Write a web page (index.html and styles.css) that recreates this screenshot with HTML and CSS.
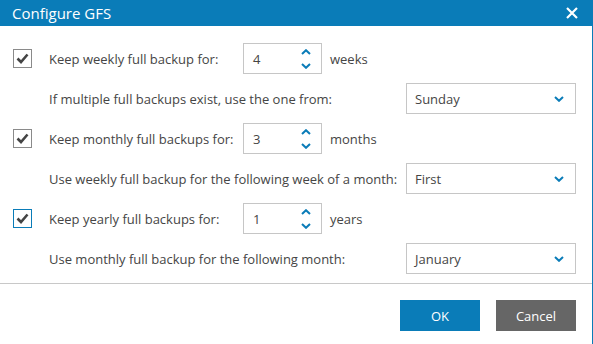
FILE: index.html
```html
<!DOCTYPE html>
<html lang="en">

<head>
  <meta charset="UTF-8" />
  <meta name="viewport" content="width=device-width, initial-scale=1.0" />
  <link rel="stylesheet" href="styles.css">
  <title>Configure GFS</title>
</head>

<body>
  <div class="dialog">
    <div class="dialog-header">
      <h1 class="title">Configure GFS</h1>
      <button class="close" aria-label="Close">
        <svg width="12" height="12" viewBox="0 0 12 12"><path d="M1 1L11 11M11 1L1 11" stroke="#fff" stroke-width="2.2" fill="none"/></svg>
      </button>
    </div>

    <div class="dialog-body">
      <div class="row">
        <span class="check"><svg width="13" height="11" viewBox="0 0 13 11"><path d="M1.5 5.5L5 9L11.5 1.5" stroke="#444" stroke-width="2.6" fill="none"/></svg></span>
        <span class="label">Keep weekly full backup for:</span>
        <div class="spin">
          <span class="value">4</span>
          <span class="arrows">
            <svg width="10" height="6" viewBox="0 0 10 6"><path d="M1 5L5 1.2L9 5" stroke="#0a7cb8" stroke-width="2" fill="none"/></svg>
            <svg width="10" height="6" viewBox="0 0 10 6"><path d="M1 1L5 4.8L9 1" stroke="#0a7cb8" stroke-width="2" fill="none"/></svg>
          </span>
        </div>
        <span class="unit">weeks</span>
      </div>
      <div class="row sub">
        <span class="label">If multiple full backups exist, use the one from:</span>
        <div class="select">
          <span>Sunday</span>
          <svg width="10" height="6" viewBox="0 0 10 6"><path d="M1 1L5 4.8L9 1" stroke="#0a7cb8" stroke-width="2" fill="none"/></svg>
        </div>
      </div>

      <div class="row">
        <span class="check"><svg width="13" height="11" viewBox="0 0 13 11"><path d="M1.5 5.5L5 9L11.5 1.5" stroke="#444" stroke-width="2.6" fill="none"/></svg></span>
        <span class="label">Keep monthly full backups for:</span>
        <div class="spin">
          <span class="value">3</span>
          <span class="arrows">
            <svg width="10" height="6" viewBox="0 0 10 6"><path d="M1 5L5 1.2L9 5" stroke="#0a7cb8" stroke-width="2" fill="none"/></svg>
            <svg width="10" height="6" viewBox="0 0 10 6"><path d="M1 1L5 4.8L9 1" stroke="#0a7cb8" stroke-width="2" fill="none"/></svg>
          </span>
        </div>
        <span class="unit">months</span>
      </div>
      <div class="row sub">
        <span class="label">Use weekly full backup for the following week of a month:</span>
        <div class="select">
          <span>First</span>
          <svg width="10" height="6" viewBox="0 0 10 6"><path d="M1 1L5 4.8L9 1" stroke="#0a7cb8" stroke-width="2" fill="none"/></svg>
        </div>
      </div>

      <div class="row">
        <span class="check focused"><svg width="13" height="11" viewBox="0 0 13 11"><path d="M1.5 5.5L5 9L11.5 1.5" stroke="#444" stroke-width="2.6" fill="none"/></svg></span>
        <span class="label">Keep yearly full backups for:</span>
        <div class="spin">
          <span class="value">1</span>
          <span class="arrows">
            <svg width="10" height="6" viewBox="0 0 10 6"><path d="M1 5L5 1.2L9 5" stroke="#0a7cb8" stroke-width="2" fill="none"/></svg>
            <svg width="10" height="6" viewBox="0 0 10 6"><path d="M1 1L5 4.8L9 1" stroke="#0a7cb8" stroke-width="2" fill="none"/></svg>
          </span>
        </div>
        <span class="unit">years</span>
      </div>
      <div class="row sub">
        <span class="label">Use monthly full backup for the following month:</span>
        <div class="select">
          <span>January</span>
          <svg width="10" height="6" viewBox="0 0 10 6"><path d="M1 1L5 4.8L9 1" stroke="#0a7cb8" stroke-width="2" fill="none"/></svg>
        </div>
      </div>
    </div>

    <div class="dialog-footer">
      <button class="btn ok">OK</button>
      <button class="btn cancel">Cancel</button>
    </div>
  </div>
</body>

</html>
```

FILE: styles.css
```css
* {
  box-sizing: border-box;
  padding: 0;
  margin: 0;
}

body {
  font-family: "Open Sans", "Noto Sans", sans-serif;
  font-size: 13px;
  color: #454545;
  background-color: #fff;
}

.dialog {
  width: 593px;
  height: 344px;
  border-right: 1px solid #0a7cb8;
  display: flex;
  flex-direction: column;
}

.dialog-header {
  height: 26px;
  background-color: #0a7cb8;
  display: flex;
  align-items: center;
  justify-content: space-between;
  padding: 0 14px 0 12px;
}

.title {
  color: #fff;
  font-size: 15px;
  font-weight: 400;
}

.close {
  background: none;
  border: none;
  display: flex;
}

.dialog-body {
  display: flex;
  flex-direction: column;
  gap: 9px;
  padding: 17px 16px 0 13px;
  height: 257px;
}

.row {
  display: flex;
  align-items: center;
  height: 31px;
}

.row.sub {
  padding-left: 36px;
}

.check {
  width: 19px;
  height: 19px;
  border: 1px solid #8a8a8a;
  display: flex;
  align-items: center;
  justify-content: center;
  margin-right: 17px;
}

.check.focused {
  border-color: #0a7cb8;
}

.row .label {
  width: 194px;
}

.row.sub .label {
  flex: 1;
}

.spin {
  width: 79px;
  height: 31px;
  border: 1px solid #c6c6c6;
  display: flex;
  align-items: center;
  justify-content: space-between;
  padding: 0 10px 0 9px;
}

.arrows {
  display: flex;
  flex-direction: column;
  gap: 8px;
}

.arrows svg {
  display: block;
}

.unit {
  margin-left: 8px;
}

.select {
  width: 170px;
  height: 31px;
  border: 1px solid #c6c6c6;
  display: flex;
  align-items: center;
  justify-content: space-between;
  padding: 0 11px 0 8px;
}

.dialog-footer {
  border-top: 1px solid #c8c8c8;
  display: flex;
  justify-content: flex-end;
  gap: 16px;
  padding: 16px 16px 0 0;
  flex: 1;
}

.btn {
  width: 80px;
  height: 31px;
  border: none;
  color: #fff;
  font-family: inherit;
  font-size: 13px;
}

.btn.ok {
  background-color: #0a7cb8;
}

.btn.cancel {
  background-color: #666;
}
```
